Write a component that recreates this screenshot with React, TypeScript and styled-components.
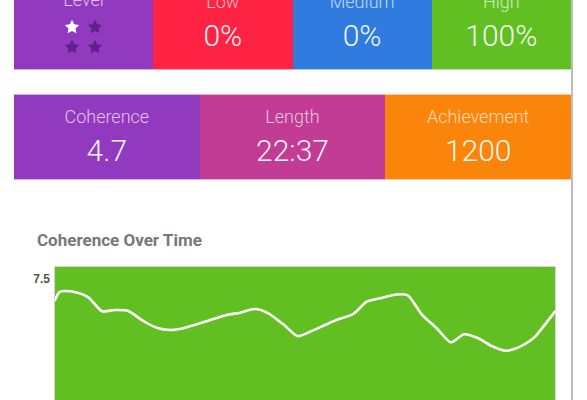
import React from "react";
import styled, { createGlobalStyle } from "styled-components";

const GlobalStyle = createGlobalStyle`
  html, body { margin: 0; padding: 0; background: #ffffff; overflow: hidden; }
  body { font-family: Roboto, "Noto Sans", Arial, sans-serif; }
`;

const Page = styled.div`
  margin-left: 14px;
  width: 557px;
  height: 400px;
  border-right: 2px solid #bdbdbd;
  overflow: hidden;
`;

const StatRow = styled.div<{ $cols: number; $height: number; $offset?: number }>`
  display: grid;
  grid-template-columns: repeat(${(p) => p.$cols}, 1fr);
  height: ${(p) => p.$height}px;
  margin-top: ${(p) => p.$offset ?? 0}px;
`;

const Cell = styled.div<{ $bg: string }>`
  background: ${(p) => p.$bg};
  display: flex;
  flex-direction: column;
  align-items: center;
  justify-content: center;
  border-bottom: 1px solid rgba(255, 255, 255, 0.6);
  border-top: 1px solid rgba(255, 255, 255, 0.6);
  box-sizing: border-box;
`;

const Label = styled.div`
  font-size: 18px;
  line-height: 22px;
  font-weight: 300;
  color: rgba(255, 255, 255, 0.72);
`;

const Value = styled.div`
  margin-top: 6px;
  font-size: 30px;
  line-height: 34px;
  font-weight: 300;
  color: rgba(255, 255, 255, 0.96);
`;

const Stars = styled.div`
  margin-top: 8px;
  display: grid;
  grid-template-columns: 16px 16px;
  column-gap: 7px;
  row-gap: 4px;
`;

const Gap = styled.div<{ $h: number }>`
  height: ${(p) => p.$h}px;
`;

const ChartSection = styled.section`
  display: flex;
  flex-direction: column;
`;

const ChartTitle = styled.h3`
  margin: 0 0 16px 23px;
  font-family: Roboto, Arial, sans-serif;
  font-size: 17px;
  line-height: 20px;
  font-weight: 700;
  color: #777777;
`;

const ChartRow = styled.div`
  display: flex;
  padding-right: 15px;
`;

const YAxis = styled.div`
  width: 40px;
  box-sizing: border-box;
  padding-right: 4px;
  padding-top: 6px;
  text-align: right;
  font-family: "Liberation Sans", Arial, sans-serif;
  font-size: 12px;
  line-height: 14px;
  font-weight: 700;
  color: #555555;
`;

const Plot = styled.div`
  flex: 1;
  height: 220px;
  border: 1px solid #d6d6d6;
  background: #62bf21;
  box-sizing: border-box;
`;

const Star = ({ on }: { on: boolean }) => (
  <svg width="16" height="16" viewBox="0 0 24 24">
    <path
      d="M12 1.2l3.3 6.7 7.4 1.1-5.35 5.2 1.26 7.35L12 18.1l-6.6 3.450 1.26-7.35L1.3 9l7.4-1.1z"
      fill={on ? "#ffffff" : "#5c2384"}
    />
  </svg>
);

const points: [number, number][] = [
  [0, 33], [5, 24.7], [18.3, 24.7], [33.3, 30.3], [46.7, 44], [60, 43], [73.3, 44],
  [88.3, 54], [101.7, 60.7], [115, 63], [128.3, 61.3], [141.7, 57.3], [158.3, 52],
  [171.7, 48], [185, 45.7], [200, 42], [213.3, 46.3], [228.3, 57.3], [242.3, 69],
  [255, 64.7], [270, 58], [283.3, 52.3], [298.3, 47], [311.7, 34.7], [325, 31.3],
  [340, 27.7], [353.3, 28.7], [366.7, 47.3], [381.7, 61.3], [395.7, 75.3], [409, 67.3],
  [423.3, 71.3], [436.7, 79], [451, 83.7], [465, 79.7], [480, 69.7], [500, 44.5],
];

const smoothPath = (pts: [number, number][]) => {
  const t = 0.12;
  let d = `M${pts[0][0]},${pts[0][1]}`;
  for (let i = 0; i < pts.length - 1; i++) {
    const p0 = pts[i - 1] || pts[i];
    const p1 = pts[i];
    const p2 = pts[i + 1];
    const p3 = pts[i + 2] || p2;
    const c1x = p1[0] + (p2[0] - p0[0]) * t;
    const c1y = p1[1] + (p2[1] - p0[1]) * t;
    const c2x = p2[0] - (p3[0] - p1[0]) * t;
    const c2y = p2[1] - (p3[1] - p1[1]) * t;
    d += ` C${c1x.toFixed(1)},${c1y.toFixed(1)} ${c2x.toFixed(1)},${c2y.toFixed(1)} ${p2[0]},${p2[1]}`;
  }
  return d;
};

export default function App() {
  return (
    <>
      <GlobalStyle />
      <Page>
        <StatRow $cols={4} $height={97} $offset={-27}>
          <Cell $bg="#9139bf">
            <Label>Level</Label>
            <Stars>
              <Star on />
              <Star on={false} />
              <Star on={false} />
              <Star on={false} />
            </Stars>
          </Cell>
          <Cell $bg="#fe2343">
            <Label>Low</Label>
            <Value>0%</Value>
          </Cell>
          <Cell $bg="#2f7be0">
            <Label>Medium</Label>
            <Value>0%</Value>
          </Cell>
          <Cell $bg="#62bf21">
            <Label>High</Label>
            <Value>100%</Value>
          </Cell>
        </StatRow>
        <Gap $h={24} />
        <StatRow $cols={3} $height={86}>
          <Cell $bg="#9139bf">
            <Label>Coherence</Label>
            <Value>4.7</Value>
          </Cell>
          <Cell $bg="#c23b94">
            <Label>Length</Label>
            <Value>22:37</Value>
          </Cell>
          <Cell $bg="#fb850b">
            <Label>Achievement</Label>
            <Value>1200</Value>
          </Cell>
        </StatRow>
        <Gap $h={50} />
        <ChartSection>
          <ChartTitle>Coherence Over Time</ChartTitle>
          <ChartRow>
            <YAxis>7.5</YAxis>
            <Plot>
              <svg width="500" height="218" viewBox="0 0 500 218">
                <path
                  d={smoothPath(points)}
                  fill="none"
                  stroke="#ffffff"
                  strokeWidth="2.6"
                  strokeLinejoin="round"
                  strokeLinecap="round"
                />
              </svg>
            </Plot>
          </ChartRow>
        </ChartSection>
      </Page>
    </>
  );
}
